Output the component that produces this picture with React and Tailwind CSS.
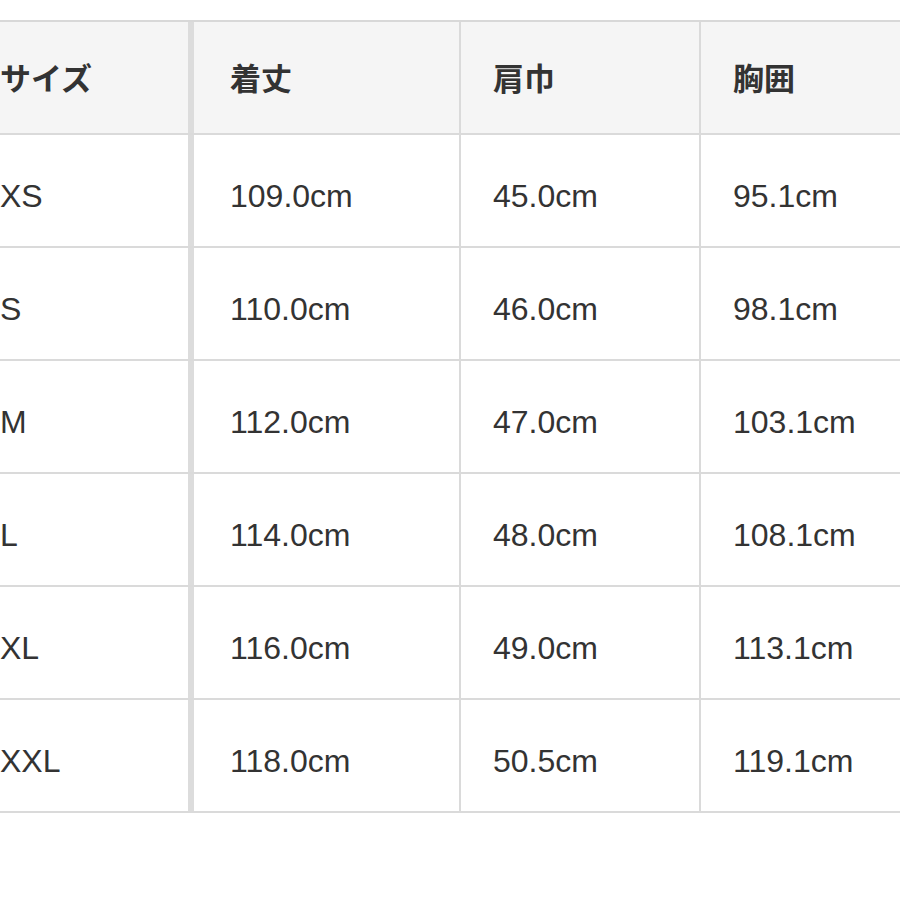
export default function App() {
  const rows = [
    ["XS", "109.0cm", "45.0cm", "95.1cm"],
    ["S", "110.0cm", "46.0cm", "98.1cm"],
    ["M", "112.0cm", "47.0cm", "103.1cm"],
    ["L", "114.0cm", "48.0cm", "108.1cm"],
    ["XL", "116.0cm", "49.0cm", "113.1cm"],
    ["XXL", "118.0cm", "50.5cm", "119.1cm"],
  ];
  const head = ["サイズ", "着丈", "肩巾", "胸囲"];
  const Row = ({ cells, header }) => (
    <div
      className={`flex h-[113px] border-b-2 border-[#dadada] ${header ? "bg-[#f5f5f5]" : "bg-white"} ${
        header
          ? "font-bold text-[31px] [font-family:'Noto_Sans_CJK_JP','Liberation_Sans',sans-serif]"
          : "text-[32px] [font-family:'Liberation_Sans','Noto_Sans_CJK_JP',sans-serif]"
      } text-[#333333]`}
    >
      <div className={`w-[221px] shrink-0 pl-[33px] flex items-center ${header ? "" : "pt-[11px]"}`}>{cells[0]}</div>
      <div className="w-[6px] shrink-0 bg-[#dcdcdc]"></div>
      <div className={`w-[267px] shrink-0 pl-[36px] flex items-center border-r-2 border-[#dadada] ${header ? "" : "pt-[11px]"}`}>{cells[1]}</div>
      <div className={`w-[240px] shrink-0 pl-[32px] flex items-center border-r-2 border-[#dadada] ${header ? "" : "pt-[11px]"}`}>{cells[2]}</div>
      <div className={`w-[260px] shrink-0 pl-[32px] flex items-center ${header ? "" : "pt-[11px]"}`}>{cells[3]}</div>
    </div>
  );
  return (
    <div className="w-[900px] h-[900px] bg-white overflow-hidden pt-[20px]">
      <div className="-ml-[33px] w-[1000px] border-t-2 border-[#d8d8d8]">
        <Row cells={head} header />
        {rows.map((r, i) => (
          <Row key={i} cells={r} />
        ))}
      </div>
    </div>
  );
}
